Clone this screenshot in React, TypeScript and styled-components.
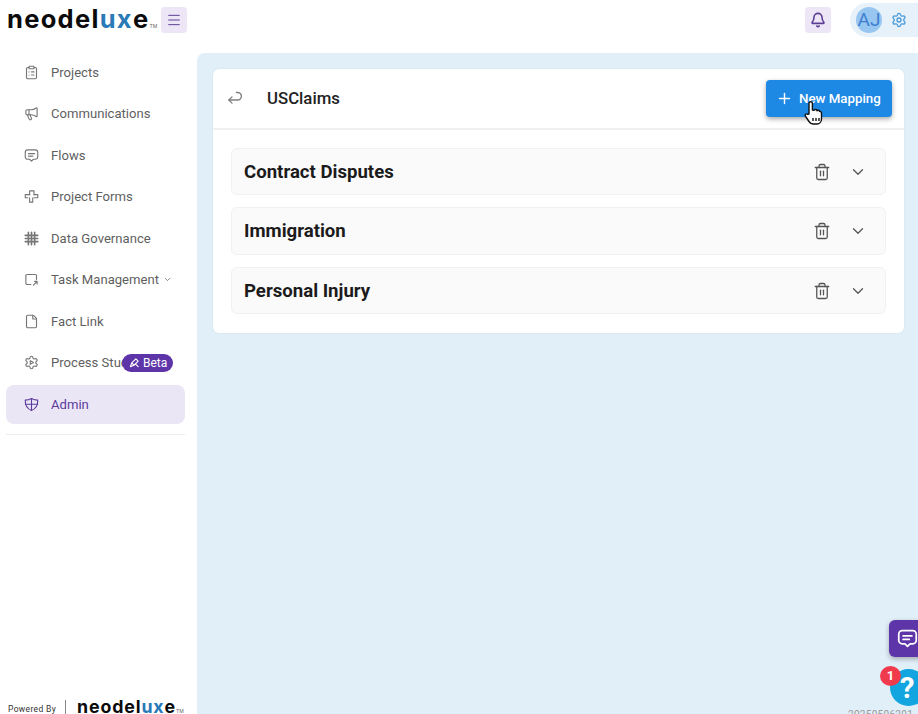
import styled, { createGlobalStyle } from "styled-components"
import { Bell, ChevronDown, ClipboardList, File, Megaphone, Menu, Plus, Settings, Trash2 } from "lucide-react"
import type { ReactNode } from "react"

const GlobalStyle = createGlobalStyle`
  html, body { margin: 0; height: 100%; overflow: hidden; background: #fff; }
  body { font-family: Roboto, "Liberation Sans", sans-serif; color: #1c1b1b; }
  #root { height: 100%; }
`

const Page = styled.div`
  position: relative;
  display: flex;
  flex-direction: column;
  width: 918px;
  height: 714px;
  overflow: hidden;
`

const Header = styled.header`
  display: flex;
  align-items: center;
  justify-content: space-between;
  height: 53px;
  flex: none;
  padding: 0 0 13px 7px;
  box-sizing: border-box;
`

const LogoRow = styled.div`
  display: flex;
  align-items: center;
  gap: 4px;
`

const Logo = styled.div<{ $small?: boolean }>`
  display: flex;
  align-items: baseline;
  font-family: Inter, sans-serif;
  font-weight: 700;
  font-size: ${p => (p.$small ? "17.8px" : "25.5px")};
  letter-spacing: ${p => (p.$small ? "0.85px" : "1.3px")};
  line-height: 1;
  padding-bottom: ${p => (p.$small ? "0" : "3px")};
  color: #0b0b0b;
`

const LogoAccent = styled.span`
  color: #2a7ab8;
`

const Tm = styled.span`
  font-size: 5px;
  letter-spacing: 0;
  font-weight: 400;
  color: #666;
`

const SquareButton = styled.div`
  width: 26px;
  height: 26px;
  border-radius: 4px;
  background: #ece6f6;
  color: #5e3f96;
  display: flex;
  align-items: center;
  justify-content: center;
`

const HeaderRight = styled.div`
  display: flex;
  align-items: center;
  gap: 19px;
`

const UserPill = styled.div`
  display: flex;
  align-items: center;
  gap: 9px;
  height: 34px;
  padding: 0 11px 0 6px;
  border-radius: 17px 0 0 17px;
  width: 68px;
  box-sizing: border-box;
  background: #e6f1fa;
  color: #4a9ad8;
`

const Avatar = styled.div`
  width: 26px;
  height: 26px;
  border-radius: 50%;
  background: #97c6f1;
  color: #3f7fd0;
  font-size: 19px;
  line-height: 26px;
  text-align: center;
  flex: none;
`

const Body = styled.div`
  display: flex;
  flex: 1;
  min-height: 0;
`

const Sidebar = styled.aside`
  position: relative;
  width: 197px;
  flex: none;
  display: flex;
  flex-direction: column;
  padding: 0 12px 0 6px;
  box-sizing: border-box;
`

const NavList = styled.nav`
  display: flex;
  flex-direction: column;
  gap: 2.5px;
  border-bottom: 1px solid #ececec;
  padding-bottom: 10px;
`

const NavItem = styled.div<{ $active?: boolean }>`
  display: flex;
  align-items: center;
  height: 39px;
  flex: none;
  padding: 0 0 1px 19px;
  box-sizing: border-box;
  gap: 13px;
  border-radius: 8px;
  font-size: 13.1px;
  white-space: nowrap;
  color: ${p => (p.$active ? "#5b3a9e" : "#5f5f5f")};
  background: ${p => (p.$active ? "#ebe6f5" : "transparent")};
`

const NavIcon = styled.span<{ $active?: boolean }>`
  width: 13px;
  height: 13px;
  display: flex;
  align-items: center;
  justify-content: center;
  flex: none;
  color: ${p => (p.$active ? "#5b3a9e" : "#767676")};
  svg { flex: none; }
`

const Clipped = styled.span`
  width: 72px;
  overflow: hidden;
`

const BetaBadge = styled.span`
  display: flex;
  align-items: center;
  gap: 3px;
  height: 18px;
  margin-left: -14px;
  padding: 0 6px 0 7px;
  border-radius: 9px;
  background: #5e35a8;
  color: #fff;
  font-size: 12px;
`

const PoweredBy = styled.div`
  margin-top: auto;
  display: flex;
  align-items: center;
  height: 14px;
  padding-left: 2px;
`

const PoweredText = styled.span`
  padding-top: 3px;
  font-size: 8.5px;
  letter-spacing: 0.35px;
  color: #333;
  white-space: nowrap;
`

const PoweredRule = styled.span`
  width: 1px;
  height: 14px;
  flex: none;
  background: #888;
  margin: 0 11px 0 9px;
`

const Main = styled.main`
  flex: 1;
  background: #e1eff9;
  border-top-left-radius: 8px;
  padding: 16px 14px 0 16px;
`

const Card = styled.section`
  background: #fff;
  border-radius: 6px;
  box-shadow: 0 0 2px rgba(0, 0, 0, 0.08);
`

const CardHeader = styled.div`
  display: flex;
  align-items: center;
  height: 61px;
  padding: 0 12px 0 14px;
  border-bottom: 2px solid #f0f0f0;
  box-sizing: border-box;
`

const BackIcon = styled.span`
  display: flex;
  color: #808080;
  margin-right: 25px;
  margin-top: -3px;
`

const CardTitle = styled.h1`
  flex: 1;
  margin: 0 0 2px;
  font-size: 16.8px;
  font-weight: 500;
  color: #222;
`

const PrimaryButton = styled.button`
  position: relative;
  display: flex;
  align-items: center;
  gap: 6px;
  width: 126px;
  height: 37px;
  padding: 0 0 1px 10px;
  border: none;
  border-radius: 4px;
  background: #1e88e5;
  color: #fff;
  font-family: inherit;
  font-size: 13.3px;
  font-weight: 500;
  box-shadow: 0 2px 5px rgba(0, 0, 0, 0.35);
`

const HandCursor = styled.svg`
  position: absolute;
  left: 36px;
  top: 20px;
`

const RowList = styled.div`
  display: flex;
  flex-direction: column;
  gap: 12px;
  padding: 17.8px 18px 19px;
`

const Row = styled.div`
  display: flex;
  align-items: center;
  height: 47.5px;
  padding: 0 18px 0 12px;
  background: #fafafa;
  border: 1px solid #f1f1f1;
  border-radius: 6px;
  box-sizing: border-box;
  color: #555;
`

const RowTitle = styled.h2`
  flex: 1;
  margin: 0;
  font-size: 18.6px;
  font-weight: 700;
  color: #1c1b1b;
`

const RowTrash = styled.span`
  display: flex;
  margin-right: 18px;
`

const ChatTab = styled.div`
  position: absolute;
  left: 889px;
  top: 620px;
  width: 40px;
  height: 37px;
  border-radius: 6px;
  background: #5e35a8;
  box-shadow: 0 2px 5px rgba(0, 0, 0, 0.3);
  color: #fff;
  display: flex;
  align-items: center;
  padding-left: 8px;
  box-sizing: border-box;
`

const HelpButton = styled.div`
  position: absolute;
  left: 890px;
  top: 669px;
  width: 37px;
  height: 37px;
  border-radius: 50%;
  background: #12a5e0;
  color: #fff;
  font-size: 29px;
  font-weight: 700;
  line-height: 38px;
  padding-left: 10px;
  box-sizing: border-box;
`

const CountBadge = styled.div`
  position: absolute;
  left: 880px;
  top: 666px;
  width: 21px;
  height: 20px;
  border-radius: 50%;
  background: #ef3b4b;
  color: #fff;
  font-size: 13px;
  font-weight: 700;
  line-height: 20px;
  text-align: center;
`

const Version = styled.div`
  position: absolute;
  left: 848px;
  top: 709px;
  font-size: 10px;
  letter-spacing: 0.3px;
  color: #9a9a9a;
  white-space: nowrap;
`

const Stroke = ({ children, width = 1.8, size = 15 }: { children: ReactNode; width?: number; size?: number }) => (
  <svg width={size} height={size} viewBox="0 0 24 24" fill="none" stroke="currentColor" strokeWidth={width} strokeLinecap="round" strokeLinejoin="round">
    {children}
  </svg>
)

// speech bubble with a centred tail, used in the nav and the chat tab
const BubbleIcon = ({ size, width }: { size?: number; width?: number }) => (
  <Stroke size={size} width={width}>
    <path d="M6 3h12a4 4 0 0 1 4 4v7a4 4 0 0 1-4 4h-3l-3 3-3-3H6a4 4 0 0 1-4-4V7a4 4 0 0 1 4-4z" />
    <path d="M7 9h10M7 13h7" />
  </Stroke>
)

const FormsIcon = () => (
  <Stroke>
    <path d="M9 9V3h7v6" />
    <path d="M16 9h6v5h-6" />
    <path d="M9 9H2v5h4" />
    <path d="M9 14v7h5v-7" />
  </Stroke>
)

const GridIcon = () => (
  <Stroke width={2.6}>
    <path d="M7 2v20M12 2v20M17 2v20M2 7h20M2 12h20M2 17h20" />
  </Stroke>
)

const TaskIcon = () => (
  <Stroke>
    <path d="M11 20H5a2 2 0 0 1-2-2V6a2 2 0 0 1 2-2h13a2 2 0 0 1 2 2v6" />
    <path d="M15 21l6-6M17 15h4v4" />
  </Stroke>
)

const ProcessIcon = () => (
  <Stroke>
    <path d="M12.22 2h-.44a2 2 0 0 0-2 2v.18a2 2 0 0 1-1 1.73l-.43.25a2 2 0 0 1-2 0l-.15-.08a2 2 0 0 0-2.73.73l-.22.38a2 2 0 0 0 .73 2.73l.15.1a2 2 0 0 1 1 1.72v.51a2 2 0 0 1-1 1.74l-.15.09a2 2 0 0 0-.73 2.73l.22.38a2 2 0 0 0 2.73.73l.15-.08a2 2 0 0 1 2 0l.43.25a2 2 0 0 1 1 1.73V20a2 2 0 0 0 2 2h.44a2 2 0 0 0 2-2v-.18a2 2 0 0 1 1-1.73l.43-.25a2 2 0 0 1 2 0l.15.08a2 2 0 0 0 2.73-.73l.22-.39a2 2 0 0 0-.73-2.73l-.15-.08a2 2 0 0 1-1-1.74v-.5a2 2 0 0 1 1-1.74l.15-.09a2 2 0 0 0 .73-2.73l-.22-.38a2 2 0 0 0-2.73-.73l-.15.08a2 2 0 0 1-2 0l-.43-.25a2 2 0 0 1-1-1.73V4a2 2 0 0 0-2-2z" />
    <path d="M10 9l5 3-5 3z" />
  </Stroke>
)

const AdminIcon = () => (
  <Stroke>
    <path d="M12 2.500c3 1.600 6.500 2.500 10 2.500 .3 8.500-3.500 14-10 16.500C5.500 19 1.700 13.500 2 5c3.500 0 7-.9 10-2.500z" />
    <path d="M12 2.500v19M2.200 11.500h19.600" />
  </Stroke>
)

const navItems: { label: string; icon: ReactNode }[] = [
  { label: "Projects", icon: <ClipboardList size={15} strokeWidth={1.8} /> },
  { label: "Communications", icon: <Megaphone size={15} strokeWidth={1.8} /> },
  { label: "Flows", icon: <BubbleIcon /> },
  { label: "Project Forms", icon: <FormsIcon /> },
  { label: "Data Governance", icon: <GridIcon /> },
]

const mappings = ["Contract Disputes", "Immigration", "Personal Injury"]

const LogoMark = ({ small }: { small?: boolean }) => (
  <Logo $small={small}>
    neodel<LogoAccent>ux</LogoAccent>e<Tm>TM</Tm>
  </Logo>
)

export default function App() {
  return (
    <Page>
      <GlobalStyle />
      <Header>
        <LogoRow>
          <LogoMark />
          <SquareButton>
            <Menu size={16} strokeWidth={1.5} />
          </SquareButton>
        </LogoRow>
        <HeaderRight>
          <SquareButton>
            <Bell size={16} strokeWidth={2.4} />
          </SquareButton>
          <UserPill>
            <Avatar>AJ</Avatar>
            <Settings size={16} />
          </UserPill>
        </HeaderRight>
      </Header>
      <Body>
        <Sidebar>
          <NavList>
            {navItems.map(item => (
              <NavItem key={item.label}>
                <NavIcon>{item.icon}</NavIcon>
                {item.label}
              </NavItem>
            ))}
            <NavItem>
              <NavIcon><TaskIcon /></NavIcon>
              <span>Task Management</span>
              <ChevronDown size={9} style={{ marginLeft: -9 }} />
            </NavItem>
            <NavItem>
              <NavIcon><File size={15} strokeWidth={1.8} /></NavIcon>
              Fact Link
            </NavItem>
            <NavItem>
              <NavIcon><ProcessIcon /></NavIcon>
              <Clipped>Process Studio</Clipped>
              <BetaBadge>
                <svg width="11" height="11" viewBox="0 0 24 24" fill="none" stroke="currentColor" strokeWidth="2.4" strokeLinecap="round" strokeLinejoin="round">
                  <path d="M3 21l3-8L15 4l5 5-9 9zM14 15l6 6M6 13l5 5" />
                </svg>
                Beta
              </BetaBadge>
            </NavItem>
            <NavItem $active>
              <NavIcon $active><AdminIcon /></NavIcon>
              Admin
            </NavItem>
          </NavList>
          <PoweredBy>
            <PoweredText>Powered By</PoweredText>
            <PoweredRule />
            <LogoMark small />
          </PoweredBy>
        </Sidebar>
        <Main>
          <Card>
            <CardHeader>
              <BackIcon>
                <svg width="15" height="15" viewBox="0 0 24 24" fill="none" stroke="currentColor" strokeWidth="2.2" strokeLinecap="round" strokeLinejoin="round">
                  <path d="M15 4h2a5.500 5.500 0 0 1 0 12H3" />
                  <path d="M8 11l-5 5 5 5" />
                </svg>
              </BackIcon>
              <CardTitle>USClaims</CardTitle>
              <PrimaryButton>
                <Plus size={17} />
                New Mapping
                <HandCursor width="22" height="26" viewBox="0 0 22 26" fill="#fff" stroke="#111" strokeWidth="1.4" strokeLinejoin="round">
                  <path d="M7 14V3.500a1.700 1.700 0 0 1 3.400 0V10l1.800.2a1.500 1.500 0 0 1 2.800.5 1.500 1.500 0 0 1 2.600.7c1.200 0 1.900.8 1.900 2V19c0 3-2 5-4.500 5H11c-2 0-3-1-4-2.500L3.300 16c-.8-1.300 1-2.800 2.200-1.700z" />
                  <path d="M11 18v3M14 18v3M17 18v3" fill="none" />
                </HandCursor>
              </PrimaryButton>
            </CardHeader>
            <RowList>
              {mappings.map(name => (
                <Row key={name}>
                  <RowTitle>{name}</RowTitle>
                  <RowTrash><Trash2 size={18} strokeWidth={1.7} /></RowTrash>
                  <ChevronDown size={18} strokeWidth={1.7} />
                </Row>
              ))}
            </RowList>
          </Card>
        </Main>
      </Body>
      <ChatTab><BubbleIcon size={21} width={2} /></ChatTab>
      <HelpButton>?</HelpButton>
      <CountBadge>1</CountBadge>
      <Version>20250506201</Version>
    </Page>
  )
}
